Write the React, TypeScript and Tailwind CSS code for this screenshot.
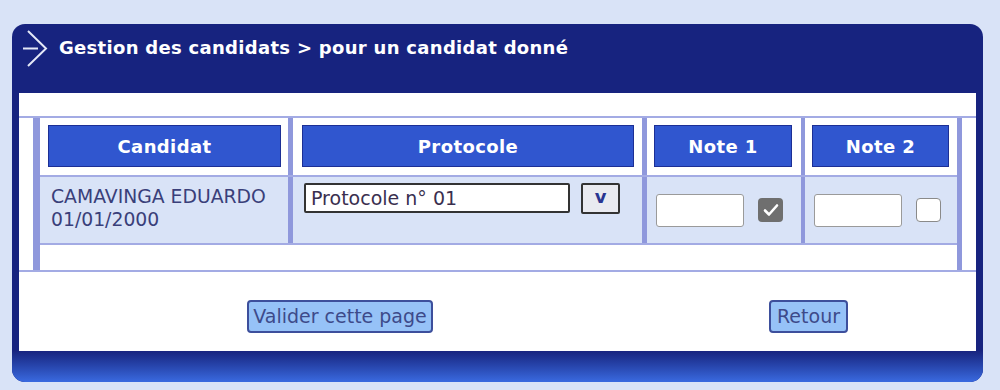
import React from "react";

const font = { fontFamily: '"DejaVu Sans", Verdana, sans-serif' };

const HeadCell = ({ label, width, pl, pr }: { label: string; width: string; pl: string; pr: string }) => (
  <div className={`${width} ${pl} ${pr} pt-[7px] pb-[8px] bg-white`}>
    <div className="h-[42px] bg-[#3056cf] border border-[#1c2f95] flex items-center justify-center text-white font-bold text-[18px] tracking-[0.4px]">
      {label}
    </div>
  </div>
);

const NoteCell = ({ width, checked }: { width: string; checked: boolean }) => (
  <div className={`${width} bg-[#d9e3f7] flex items-center pl-[9px] gap-[14px]`}>
    <input
      type="text"
      className="w-[88px] h-[33px] bg-white border-[1.5px] border-[#9a9a9a] rounded-[3px] outline-none"
    />
    {checked ? (
      <div className="w-[25px] h-[24px] rounded-[4px] bg-[#6f6f6f] flex items-center justify-center">
        <svg width="16" height="14" viewBox="0 0 16 14">
          <path d="M2 7.5 L6 11.5 L14 2.5" stroke="white" strokeWidth="2.6" fill="none" strokeLinecap="round" strokeLinejoin="round" />
        </svg>
      </div>
    ) : (
      <div className="w-[25px] h-[24px] rounded-[4px] bg-white border-[1.5px] border-[#8a8a8a]" />
    )}
  </div>
);

export default function App() {
  return (
    <div className="w-[1000px] h-[390px] bg-[#d9e3f7] pt-[24px] pl-[12px]" style={font}>
      <div className="w-[971px] h-[358px] bg-[#17237f] rounded-[13px] flex flex-col overflow-hidden">
        {/* header */}
        <div className="h-[69px] flex items-start pt-[6px] pl-[10px]">
          <svg width="27" height="38" viewBox="0 0 27 38">
            <path d="M6 1 L24 18.5 L6 36" stroke="#e4e8f7" strokeWidth="2" fill="none" />
            <path d="M1 18.5 L16 18.5" stroke="#e4e8f7" strokeWidth="2" fill="none" />
          </svg>
          <div className="ml-[10px] mt-[7px] text-white font-bold text-[18px] tracking-[0.3px] leading-[22px]">
            Gestion des candidats &gt; pour un candidat donné
          </div>
        </div>

        {/* body */}
        <div className="px-[7px]">
          <div className="h-[258px] bg-white flex flex-col">
            <div className="h-[23px]" />
            <div className="border-t-2 border-b-2 border-[#a3abe4]">
              <div className="mx-[14px] border-l-[7px] border-r-[5px] border-[#8f98dc]">
                {/* header row */}
                <div className="flex">
                  <HeadCell label="Candidat" width="w-[248px]" pl="pl-[8px]" pr="pr-[7px]" />
                  <div className="w-[5px] bg-[#8f98dc]" />
                  <HeadCell label="Protocole" width="w-[349px]" pl="pl-[9px]" pr="pr-[8px]" />
                  <div className="w-[5px] bg-[#8f98dc]" />
                  <HeadCell label="Note 1" width="w-[154px]" pl="pl-[7px]" pr="pr-[9px]" />
                  <div className="w-[4px] bg-[#8f98dc]" />
                  <HeadCell label="Note 2" width="w-[152px]" pl="pl-[7px]" pr="pr-[8px]" />
                </div>
                <div className="h-[2px] bg-[#a3abe4]" />
                {/* data row */}
                <div className="flex h-[66px]">
                  <div className="w-[248px] bg-[#d9e3f7] pl-[11px] pt-[8px] text-[#3a3f7a] text-[18.8px] leading-[23px] whitespace-nowrap">
                    CAMAVINGA EDUARDO
                    <br />
                    01/01/2000
                  </div>
                  <div className="w-[5px] bg-[#8f98dc]" />
                  <div className="w-[349px] bg-[#d9e3f7] pl-[11px] pt-[6px] flex items-start gap-[11px]">
                    <input
                      type="text"
                      defaultValue="Protocole n° 01"
                      className="w-[266px] h-[30px] bg-white border-2 border-[#333] rounded-[2px] px-[5px] text-[19px] text-[#3a2f4f] outline-none"
                      style={font}
                    />
                    <button
                      className="w-[39px] h-[31px] bg-[#e9eaf0] border-2 border-[#333] rounded-[2px] text-[#2a3590] font-bold text-[18px] leading-none pb-[3px]"
                      style={font}
                    >
                      v
                    </button>
                  </div>
                  <div className="w-[5px] bg-[#8f98dc]" />
                  <NoteCell width="w-[154px]" checked />
                  <div className="w-[4px] bg-[#8f98dc]" />
                  <NoteCell width="w-[152px]" checked={false} />
                </div>
                <div className="h-[2px] bg-[#a3abe4]" />
                {/* empty row */}
                <div className="h-[25px] bg-white" />
              </div>
            </div>
            {/* buttons */}
            <div className="flex pt-[28px] pl-[228px]">
              <button
                className="w-[186px] h-[33px] bg-[#96c2f7] border-2 border-[#3d4f9c] rounded-[4px] text-[#3d4a8a] text-[19px] whitespace-nowrap"
                style={font}
              >
                Valider cette page
              </button>
              <button
                className="ml-[336px] w-[79px] h-[33px] bg-[#96c2f7] border-2 border-[#3d4f9c] rounded-[4px] text-[#3d4a8a] text-[19px]"
                style={font}
              >
                Retour
              </button>
            </div>
          </div>
        </div>

        {/* footer */}
        <div className="flex-1 bg-gradient-to-b from-[#18247f] to-[#3a6ae0]" />
      </div>
    </div>
  );
}
